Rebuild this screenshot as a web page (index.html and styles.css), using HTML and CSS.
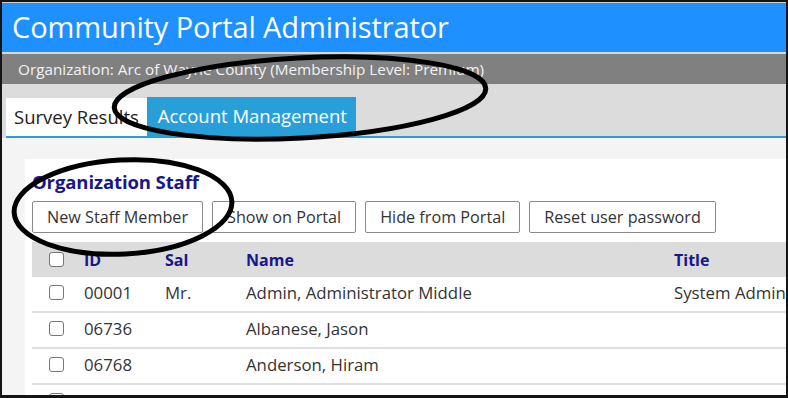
FILE: index.html
```html
<!DOCTYPE html>
<html lang="en">
<head>
  <meta charset="UTF-8">
  <title>Community Portal Administrator</title>
  <link rel="stylesheet" href="styles.css">
</head>
<body>
  <div class="frame">
    <div class="header">Community Portal Administrator</div>
    <div class="org-bar">Organization: Arc of Wayne County (Membership Level: Premium)</div>

    <div class="tabs">
      <div class="tab-strip">
        <div class="tab">Survey Results</div>
        <div class="tab active">Account Management</div>
      </div>
    </div>

    <div class="content">
      <div class="panel">
        <h2>Organization Staff</h2>
        <div class="toolbar">
          <button>New Staff Member</button>
          <button>Show on Portal</button>
          <button>Hide from Portal</button>
          <button>Reset user password</button>
        </div>

        <div class="staff-table">
          <div class="row head">
            <div><span class="check"></span></div>
            <div>ID</div>
            <div>Sal</div>
            <div>Name</div>
            <div>Title</div>
          </div>
          <div class="row">
            <div><span class="check"></span></div>
            <div>00001</div>
            <div>Mr.</div>
            <div>Admin, Administrator Middle</div>
            <div>System Administrator</div>
          </div>
          <div class="row">
            <div><span class="check"></span></div>
            <div>06736</div>
            <div></div>
            <div>Albanese, Jason</div>
            <div></div>
          </div>
          <div class="row">
            <div><span class="check"></span></div>
            <div>06768</div>
            <div></div>
            <div>Anderson, Hiram</div>
            <div></div>
          </div>
          <div class="row">
            <div><span class="check"></span></div>
            <div>03451</div>
            <div></div>
            <div>Barr, Grace</div>
            <div></div>
          </div>
        </div>
      </div>
    </div>

    <!-- hand drawn marks over the screenshot -->
    <svg class="marks" width="788" height="398" viewBox="0 0 788 398">
      <ellipse cx="300" cy="98" rx="186" ry="40" transform="rotate(-3 300 98)" />
      <ellipse cx="123" cy="207" rx="109" ry="47" transform="rotate(-3 123 207)" />
    </svg>
  </div>
</body>
</html>
```

FILE: styles.css
```css
html, body {
  margin: 0;
  padding: 0;
}
body {
  width: 788px;
  height: 398px;
  overflow: hidden;
  background: #141414;
  font-family: "Open Sans", "Noto Sans", sans-serif;
}
.frame {
  position: relative;
  box-sizing: border-box;
  width: 788px;
  height: 398px;
  border-style: solid;
  border-color: #141414;
  border-width: 2px 2px 3px 2px;
  background: #f4f4f4;
  overflow: hidden;
}
.header {
  height: 49px;
  border-top: 1px solid #cfcfcf;
  border-bottom: 2px solid #d9d9d9;
  background: #1e90ff;
  color: #fff;
  font-size: 29px;
  line-height: 47px;
  padding-left: 10px;
  letter-spacing: -0.1px;
}
.org-bar {
  height: 30px;
  background: #808080;
  color: #f2f2f2;
  font-size: 15.3px;
  line-height: 30px;
  padding-left: 16px;
}
.tabs {
  height: 54px;
  padding-left: 4px;
  background: #dcdcdc;
  display: flex;
}
.tab-strip {
  flex: 1;
  display: flex;
  align-items: flex-end;
  border-bottom: 2px solid #2a9fd6;
}
.tab {
  height: 38px;
  padding: 0 8px;
  background: #fff;
  color: #222;
  font-size: 18.5px;
  line-height: 37px;
}
.tab.active {
  height: 39px;
  padding: 0 9px 0 11px;
  background: #289fd8;
  color: #fff;
}
.content {
  padding: 21px 0 0 23px;
}
.panel {
  background: #fff;
  padding: 8px 0 0 7px;
  height: 300px;
}
h2 {
  margin: 0;
  color: #17178a;
  font-size: 18.5px;
  font-weight: bold;
  line-height: 30px;
  letter-spacing: -0.1px;
}
.toolbar {
  display: flex;
  gap: 9px;
  margin-top: 4px;
}
button {
  height: 32px;
  padding: 0 14px;
  background: #fff;
  border: 1px solid #8a8a8a;
  border-radius: 2px;
  color: #333;
  font-family: "Open Sans", "Noto Sans", sans-serif;
  font-size: 16.2px;
}
.staff-table {
  margin-top: 9px;
  width: 800px;
}
.row {
  display: grid;
  grid-template-columns: 52px 81px 81px 428px 1fr;
  align-items: center;
  box-sizing: border-box;
  height: 36px;
  padding-bottom: 4px;
  border-bottom: 2px solid #e0e0e0;
  color: #333;
  font-size: 16.8px;
  white-space: nowrap;
}
.row.head {
  height: 35px;
  padding-bottom: 0;
  border-bottom: none;
  background: #dcdcdc;
  color: #17178a;
  font-size: 16px;
  font-weight: bold;
}
.row > div:first-child {
  padding-left: 17px;
  display: flex;
}
.check {
  display: inline-block;
  box-sizing: border-box;
  width: 15px;
  height: 15px;
  border: 1px solid #767676;
  border-radius: 3px;
  background: #fff;
}
.marks {
  position: absolute;
  left: -2px;
  top: -2px;
  pointer-events: none;
}
.marks ellipse {
  fill: none;
  stroke: #000;
  stroke-width: 5;
}
```
